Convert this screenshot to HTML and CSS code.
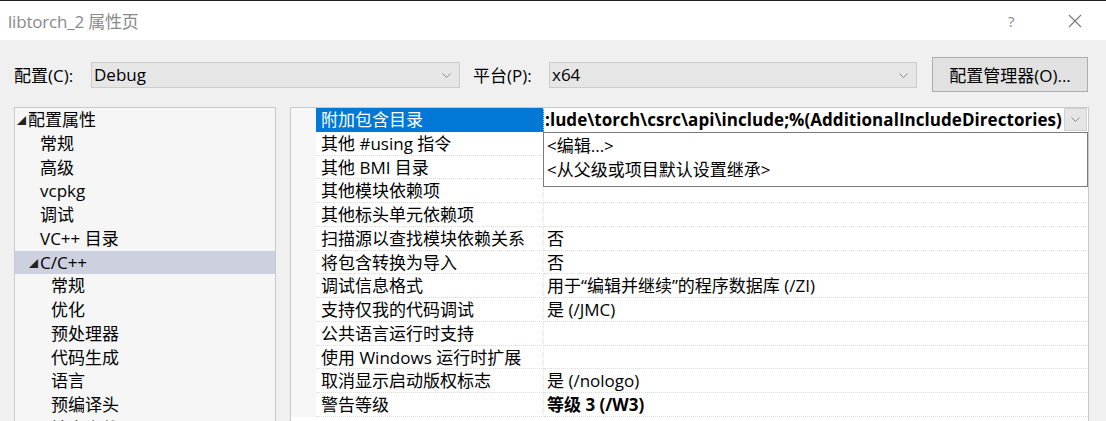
FILE: index.html
```html
<!DOCTYPE html>
<html lang="zh-CN">
<head>
<meta charset="utf-8">
<title>libtorch_2 属性页</title>
<link rel="stylesheet" href="styles.css">
</head>
<body>
<div class="window">
  <div class="topstrip"></div>
  <div class="titlebar">
    <span class="title">libtorch_2 属性页</span>
    <span class="help">?</span>
    <span class="close"><svg width="14" height="14" viewBox="0 0 14 14"><path d="M1 1 L13 13 M13 1 L1 13" stroke="#777" stroke-width="1.1" fill="none"/></svg></span>
  </div>
  <div class="content">
    <div class="config-row">
      <span class="label label-config">配置(C):</span>
      <div class="combo combo-config"><span>Debug</span><svg class="chev" width="9" height="5" viewBox="0 0 9 5"><path d="M0.5 0.5 L4.5 4.5 L8.5 0.5" stroke="#888" fill="none"/></svg></div>
      <span class="label label-platform">平台(P):</span>
      <div class="combo combo-platform"><span>x64</span><svg class="chev" width="9" height="5" viewBox="0 0 9 5"><path d="M0.5 0.5 L4.5 4.5 L8.5 0.5" stroke="#888" fill="none"/></svg></div>
      <button class="btn">配置管理器(O)...</button>
    </div>
    <div class="main">
      <div class="tree">
        <div class="node l1"><span class="tri">◢</span>配置属性</div>
        <div class="node l2">常规</div>
        <div class="node l2">高级</div>
        <div class="node l2">vcpkg</div>
        <div class="node l2">调试</div>
        <div class="node l2">VC++ 目录</div>
        <div class="node l2b sel"><span class="tri">◢</span>C/C++</div>
        <div class="node l3">常规</div>
        <div class="node l3">优化</div>
        <div class="node l3">预处理器</div>
        <div class="node l3">代码生成</div>
        <div class="node l3">语言</div>
        <div class="node l3">预编译头</div>
        <div class="node l3">输出文件</div>
      </div>
      <div class="grid">
        <div class="row">
          <div class="gut"></div><div class="name active">附加包含目录</div>
          <div class="val edit"><span class="edit-text">:lude\torch\csrc\api\include;%(AdditionalIncludeDirectories)</span><span class="ddbtn"><svg width="9" height="5" viewBox="0 0 9 5"><path d="M0.5 0.5 L4.5 4.5 L8.5 0.5" stroke="#888" fill="none"/></svg></span></div>
        </div>
        <div class="row"><div class="gut"></div><div class="name">其他 #using 指令</div><div class="val"></div></div>
        <div class="row"><div class="gut"></div><div class="name">其他 BMI 目录</div><div class="val"></div></div>
        <div class="row"><div class="gut"></div><div class="name">其他模块依赖项</div><div class="val"></div></div>
        <div class="row"><div class="gut"></div><div class="name">其他标头单元依赖项</div><div class="val"></div></div>
        <div class="row"><div class="gut"></div><div class="name">扫描源以查找模块依赖关系</div><div class="val">否</div></div>
        <div class="row"><div class="gut"></div><div class="name">将包含转换为导入</div><div class="val">否</div></div>
        <div class="row"><div class="gut"></div><div class="name">调试信息格式</div><div class="val">用于“编辑并继续”的程序数据库 (/ZI)</div></div>
        <div class="row"><div class="gut"></div><div class="name">支持仅我的代码调试</div><div class="val">是 (/JMC)</div></div>
        <div class="row"><div class="gut"></div><div class="name">公共语言运行时支持</div><div class="val"></div></div>
        <div class="row"><div class="gut"></div><div class="name">使用 Windows 运行时扩展</div><div class="val"></div></div>
        <div class="row"><div class="gut"></div><div class="name">取消显示启动版权标志</div><div class="val">是 (/nologo)</div></div>
        <div class="row"><div class="gut"></div><div class="name">警告等级</div><div class="val bold">等级 3 (/W3)</div></div>
        <div class="dropdown">
          <div class="opt">&lt;编辑...&gt;</div>
          <div class="opt">&lt;从父级或项目默认设置继承&gt;</div>
        </div>
      </div>
    </div>
  </div>
</div>
</body>
</html>
```

FILE: styles.css
```css
* { box-sizing: border-box; }
html, body { margin: 0; padding: 0; }
body {
  width: 1106px;
  height: 421px;
  overflow: hidden;
  background: #f0f0f0;
  font-family: "Open Sans", "Noto Sans CJK SC", sans-serif;
  font-size: 17px;
  color: #000;
}
.window { width: 1106px; height: 421px; overflow: hidden; }
.topstrip { height: 1px; background: #1f1f1f; }
.titlebar {
  height: 39px;
  background: #fff;
  display: flex;
  align-items: center;
  padding-left: 8px;
}
.title { color: #8a8a8a; font-size: 17px; flex: 1; letter-spacing: -0.2px; }
.help { color: #888; font-size: 15px; width: 60px; }
.close { width: 38px; display: flex; align-items: center; }
.content { padding-left: 14px; }
.config-row {
  display: flex;
  align-items: center;
  height: 51px;
  margin-top: 9px;
}
.label { white-space: nowrap; }
.label-config { width: 77px; }
.label-platform { width: 76px; margin-left: 13px; }
.combo {
  height: 26px;
  background: #e6e6e6;
  border: 1px solid #cccccc;
  display: flex;
  align-items: center;
  justify-content: space-between;
  padding: 0 8px 0 2px;
}
.combo-config { width: 369px; }
.combo-platform { width: 368px; }
.chev { margin-top: 1px; }
.btn {
  margin-left: 15px;
  width: 156px;
  height: 35px;
  background: #e1e1e1;
  border: 1px solid #adadad;
  font-family: inherit;
  font-size: 17px;
  color: #000;
  padding: 0;
}
.main {
  display: flex;
  gap: 14px;
  margin-top: 7px;
}
.tree {
  width: 262px;
  height: 330px;
  background: #f6f6f6;
  border: 1px solid #c9c9c9;
}
.node {
  height: 23.75px;
  line-height: 23.75px;
  white-space: nowrap;
}
.tri { font-size: 9px; display: inline-block; width: 11px; vertical-align: 2px; color: #222; }
.l1 { padding-left: 2px; }
.l2 { padding-left: 25px; }
.l2b { padding-left: 14px; }
.l3 { padding-left: 36px; }
.sel { background: #cdd1df; }
.grid {
  position: relative;
  width: 799px;
  height: 330px;
  background: #fff;
  border: 1px solid #c9c9c9;
}
.row {
  display: flex;
  height: 23.75px;
}
.gut { width: 25px; background: #f7f7f7; flex: none; }
.name {
  width: 228px;
  flex: none;
  padding-left: 5px;
  line-height: 23px;
  white-space: nowrap;
  border-bottom: 1px dotted #dcdcdc;
  border-right: 1px dotted #e3e3e3;
}
.name.active { background: #0078d7; color: #fff; border-bottom-color: #0078d7; }
.val {
  flex: 1;
  padding-left: 3px;
  line-height: 23px;
  white-space: nowrap;
  border-bottom: 1px dotted #dcdcdc;
  overflow: hidden;
}
.bold { font-weight: 700; }
.edit {
  display: flex;
  align-items: center;
  padding-left: 1px;
  border-bottom: none;
}
.edit-text { font-weight: 700; flex: 1; overflow: hidden; letter-spacing: 0.05px; }
.ddbtn {
  width: 23px;
  height: 23px;
  background: #e5e5e5;
  border: 1px solid #d2d2d2;
  display: flex;
  align-items: center;
  justify-content: center;
  margin-right: 1px;
}
.dropdown {
  position: absolute;
  left: 252px;
  top: 24px;
  width: 545px;
  height: 55px;
  background: #fff;
  border: 1px solid #7a7a7a;
  padding-top: 1px;
}
.opt {
  height: 23.75px;
  line-height: 23.75px;
  padding-left: 3px;
  white-space: nowrap;
}
```
